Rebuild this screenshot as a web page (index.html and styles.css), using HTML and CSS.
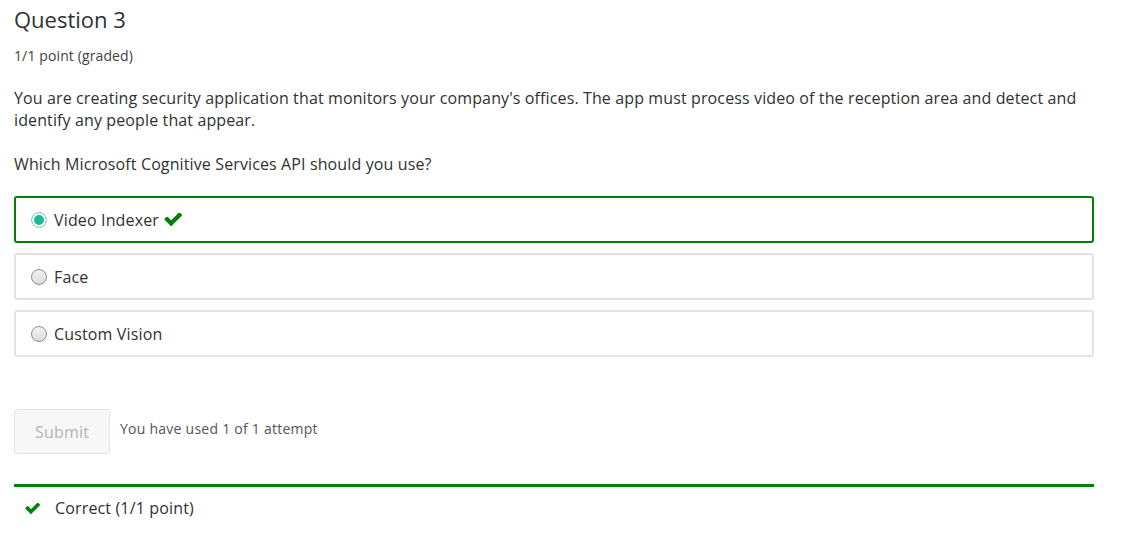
FILE: index.html
```html
<!DOCTYPE html>
<html>
<head>
<meta charset="utf-8">
<link rel="stylesheet" href="styles.css">
</head>
<body>
<div class="problem">
  <h3 class="title">Question 3</h3>
  <div class="points">1/1 point (graded)</div>
  <p class="text">You are creating security application that monitors your company's offices. The app must process video of the reception area and detect and identify any people that appear.</p>
  <p class="text">Which Microsoft Cognitive Services API should you use?</p>
  <div class="choices">
    <label class="choice correct">
      <span class="radio checked"></span>
      <span class="label">Video Indexer</span>
      <svg class="check" width="18" height="13" viewBox="85 374 1586 1152"><path fill="#008100" d="M1671 566q0 40-28 68l-724 724-136 136q-28 28-68 28t-68-28l-136-136-362-362q-28-28-28-68t28-68l136-136q28-28 68-28t68 28l294 295 656-657q28-28 68-28t68 28l136 136q28 28 28 68z"/></svg>
    </label>
    <label class="choice">
      <span class="radio"></span>
      <span class="label">Face</span>
    </label>
    <label class="choice">
      <span class="radio"></span>
      <span class="label">Custom Vision</span>
    </label>
  </div>
  <div class="actions">
    <button class="submit" disabled>Submit</button>
    <span class="attempts">You have used 1 of 1 attempt</span>
  </div>
  <div class="notification">
    <svg class="ncheck" width="15" height="11" viewBox="85 374 1586 1152"><path fill="#008100" d="M1671 566q0 40-28 68l-724 724-136 136q-28 28-68 28t-68-28l-136-136-362-362q-28-28-28-68t28-68l136-136q28-28 68-28t68 28l294 295 656-657q28-28 68-28t68 28l136 136q28 28 28 68z"/></svg>
    <span>Correct (1/1 point)</span>
  </div>
</div>
</body>
</html>
```

FILE: styles.css
```css
html, body {
  margin: 0;
  padding: 0;
  background: #fff;
}
body {
  font-family: "Open Sans", sans-serif;
  color: #313131;
}
.problem {
  width: 1080px;
  padding: 0 14px;
}
.title {
  margin: 0;
  padding-top: 4px;
  font-size: 22px;
  font-weight: 400;
  line-height: 30px;
  color: #313131;
}
.points {
  margin-top: 12px;
  font-size: 14px;
  line-height: 20px;
  letter-spacing: 0.12px;
  color: #414141;
}
.text {
  margin: 21px 0 0;
  font-size: 16px;
  line-height: 22px;
  letter-spacing: 0.12px;
}
.text + .text {
  margin-top: 22px;
}
.choices {
  margin-top: 21px;
  display: flex;
  flex-direction: column;
  gap: 10px;
}
.choice {
  display: flex;
  align-items: center;
  height: 43px;
  border: 2px solid #e3e3e3;
  border-radius: 3px;
  padding: 0 15px;
  font-size: 16px;
  letter-spacing: 0.15px;
}
.choice.correct {
  border-color: #008100;
}
.radio {
  width: 14px;
  height: 14px;
  border-radius: 50%;
  border: 1px solid #8f8f8f;
  background: linear-gradient(#f2f2f2, #dcdcdc);
  margin-right: 7px;
  box-sizing: content-box;
}
.radio.checked {
  border-color: #9bd7c6;
  background: #1fb896;
  box-shadow: inset 0 0 0 2px #fff;
}
.label {
  line-height: 22px;
}
.check {
  margin-left: 5px;
}
.actions {
  margin-top: 52px;
  display: flex;
  align-items: flex-start;
  gap: 10px;
}
.submit {
  width: 96px;
  height: 45px;
  border: 1px solid #e3e3e3;
  border-radius: 3px;
  background: #f7f7f7;
  color: #b4b4b4;
  font-family: "Open Sans", sans-serif;
  font-size: 16px;
  letter-spacing: 0.2px;
  padding: 0;
}
.attempts {
  font-size: 14px;
  color: #555;
  line-height: 20px;
  letter-spacing: 0.25px;
  margin-top: 10px;
}
.notification {
  margin-top: 30px;
  border-top: 3px solid #008100;
  display: flex;
  align-items: center;
  padding: 10px 0 0 11px;
  font-size: 16px;
  line-height: 22px;
  letter-spacing: 0.15px;
}
.ncheck {
  margin-right: 15px;
}
```
